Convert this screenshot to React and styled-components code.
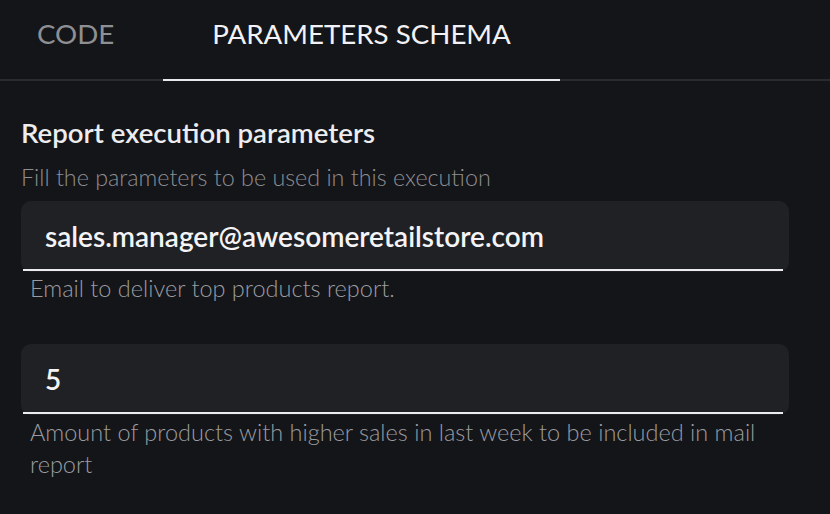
import React from 'react';
import styled, { createGlobalStyle } from 'styled-components';

const Global = createGlobalStyle`
  html, body {
    margin: 0;
    padding: 0;
    background: #141519;
    font-family: Lato, "Noto Sans", sans-serif;
    color: #ececf0;
  }
`

const Page = styled.div`
  width: 830px;
  height: 514px;
  overflow: hidden;
  background: #141519;
`

const TabBar = styled.div`
  display: flex;
  height: 81px;
  border-bottom: 2px solid #2a2b2f;
  box-sizing: border-box;
`

const Tab = styled.div`
  width: ${p => p.width}px;
  box-sizing: border-box;
  display: flex;
  align-items: center;
  justify-content: ${p => (p.center ? 'center' : 'flex-start')};
  padding-left: ${p => p.pad || 0}px;
  padding-bottom: 12px;
  font-size: 27.7px;
  color: ${p => (p.active ? '#f2f2f6' : '#8e8f93')};
  border-bottom: 2px solid ${p => (p.active ? '#e8e8ef' : 'transparent')};
  margin-bottom: -2px;
`

const Content = styled.div`
  padding: 36px 41px 0 21px;
`

const Title = styled.div`
  font-size: 27.6px;
  font-weight: 600;
  color: #ededf0;
  line-height: 32px;
`

const Subtitle = styled.div`
  font-size: 23.3px;
  font-weight: 300;
  color: #8d8e92;
  line-height: 32px;
  margin-top: 12px;
`

const Field = styled.div`
  margin-top: ${p => p.gap}px;
`

const InputBox = styled.div`
  height: 71px;
  background: #202125;
  border-radius: 10px;
  position: relative;
  display: flex;
  align-items: center;
  padding-left: 24px;
  padding-bottom: 1px;
  box-sizing: border-box;
  font-size: 28px;
  font-weight: 600;
  color: #f4f4f6;

  &::after {
    content: '';
    position: absolute;
    left: 2px;
    right: 6px;
    bottom: 1px;
    height: 2px;
    background: #ebebf0;
  }
`

const Helper = styled.div`
  padding: ${p => p.top || 0}px 9px 0 9px;
  font-size: 23.5px;
  font-weight: 300;
  color: #9b9ca0;
  line-height: 32px;
`

export default function App() {
  return (
    <Page>
      <Global />
      <TabBar>
        <Tab width={163} pad={37}>CODE</Tab>
        <Tab width={397} center active>PARAMETERS SCHEMA</Tab>
      </TabBar>
      <Content>
        <Title>Report execution parameters</Title>
        <Subtitle>Fill the parameters to be used in this execution</Subtitle>
        <Field gap={8}>
          <InputBox>sales.manager@awesomeretailstore.com</InputBox>
          <Helper>Email to deliver top products report.</Helper>
        </Field>
        <Field gap={40}>
          <InputBox>5</InputBox>
          <Helper top={1}>Amount of products with higher sales in last week to be included in mail report</Helper>
        </Field>
      </Content>
    </Page>
  );
}
